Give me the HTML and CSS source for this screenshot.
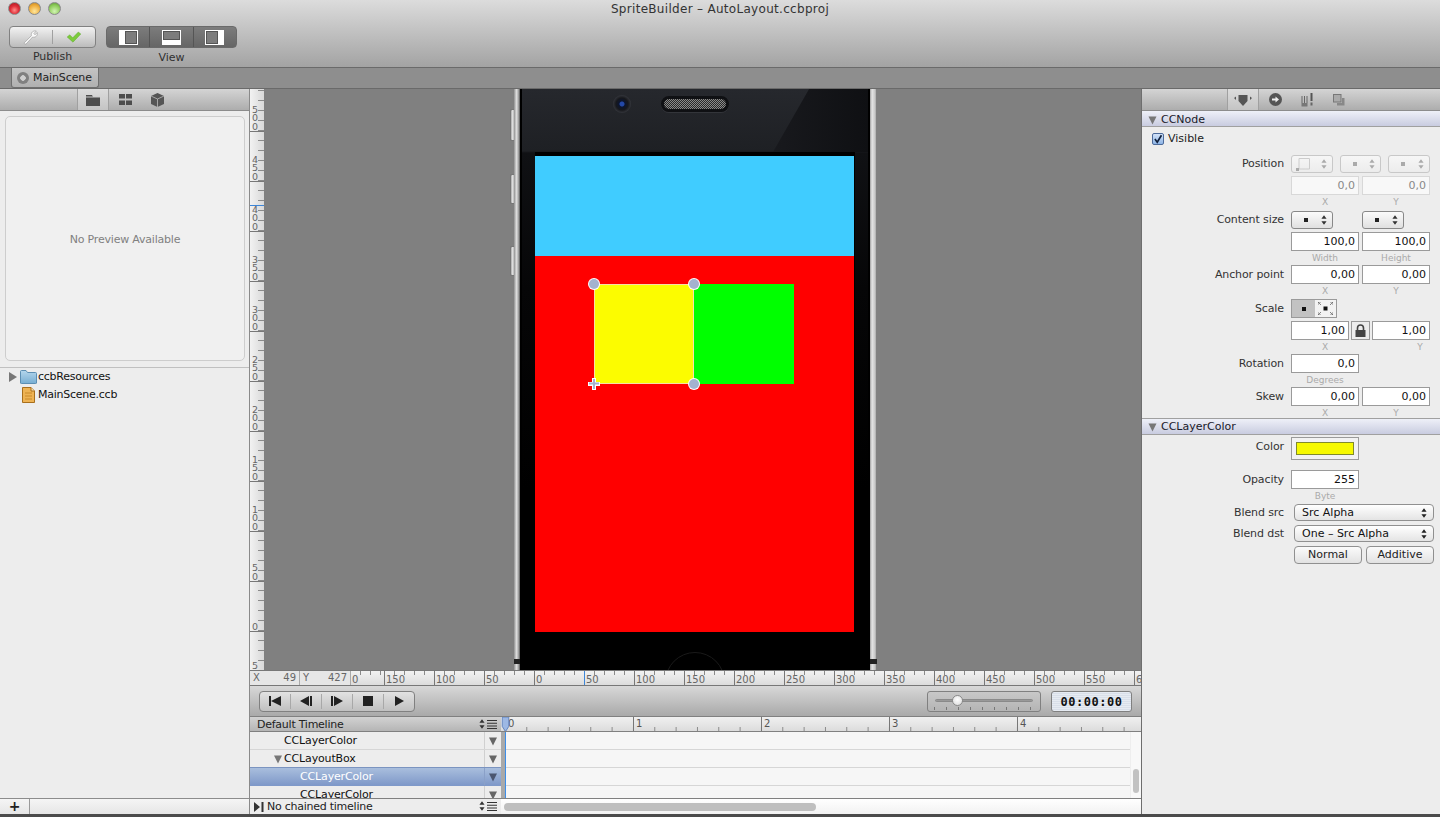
FILE: index.html
```html
<!DOCTYPE html>
<html lang="en">
<head>
<meta charset="utf-8">
<title>SpriteBuilder - AutoLayout.ccbproj</title>
<link rel="stylesheet" href="styles.css">
</head>
<body>
<svg class="sprite" aria-hidden="true">
  <symbol id="updown" viewBox="0 0 7 11"><path d="M3.500 0 L6.500 4 H.5Z M3.500 11 L6.500 7 H.5Z"/></symbol>
  <symbol id="menu" viewBox="0 0 10 9"><path d="M0 0h10v1H0zM0 2.700h10v1H0zM0 5.400h10v1H0zM0 8h10v1H0z"/></symbol>
  <symbol id="tri" viewBox="0 0 10 10"><path d="M1 1.500H9L5 9.500Z"/></symbol>
</svg>
<div class="window">
  <header class="toolbar">
    <div class="titlebar">
      <div class="lights"><span class="light red"></span><span class="light amber"></span><span class="light green"></span></div>
      <div class="title">SpriteBuilder – AutoLayout.ccbproj</div>
      <div></div>
    </div>
    <div class="tools">
      <div class="tool-group">
        <div class="seg publish">
          <span class="seg-cell"><svg width="16" height="16" viewBox="0 0 18 18"><path d="M1.500 15.500 L9.500 7.500 C8.500 4 11.500 1.500 15 2.300 L12.300 5 L13.500 6.500 L16 4 C16.800 7.500 14 10 10.800 9 L3.500 16.800 C2.500 17.300 1 16.500 1.500 15.500Z" fill="#fafafa" stroke="#8a8a8a" stroke-width=".6"/></svg></span>
          <span class="seg-cell"><svg width="16" height="12" viewBox="0 0 18 14"><path d="M1 7 L4 4.500 L7.500 8 L14 1.200 L17 3.500 L7.800 13 Z" fill="#7ccb3c" stroke="#5aa52a" stroke-width=".5"/></svg></span>
        </div>
        <div class="tool-label">Publish</div>
      </div>
      <div class="tool-group">
        <div class="seg view">
          <span class="view-cell"><svg width="19" height="15" viewBox="0 0 19 15"><rect width="19" height="15" fill="#fff"/><rect x="6.500" y="1.500" width="11" height="12" fill="#7d7d7d" stroke="#555"/></svg></span>
          <span class="view-cell"><svg width="19" height="15" viewBox="0 0 19 15"><rect width="19" height="15" fill="#fff"/><rect x="1.500" y="1.500" width="16" height="8" fill="#7d7d7d" stroke="#555"/></svg></span>
          <span class="view-cell"><svg width="19" height="15" viewBox="0 0 19 15"><rect width="19" height="15" fill="#fff"/><rect x="1.500" y="1.500" width="11" height="12" fill="#7d7d7d" stroke="#555"/></svg></span>
        </div>
        <div class="tool-label">View</div>
      </div>
    </div>
  </header>

  <div class="tabbar">
    <div class="tab"><span class="tab-dot"></span>MainScene</div>
  </div>

  <div class="main">
    <aside class="left">
      <div class="panel-head head-left">
        <span class="head-tab active"><svg width="14" height="12" viewBox="0 0 14 12"><path d="M0 1h6l1 2h7v9H0z" fill="#4d4d4d"/><path d="M0 3h14" stroke="#ccc"/></svg></span>
        <span class="head-tab"><svg width="13" height="11" viewBox="0 0 13 11"><path d="M0 0h6v4.500H0zM7 0h6v4.500H7zM0 6.500h6V11H0zM7 6.500h6V11H7z" fill="#4d4d4d"/></svg></span>
        <span class="head-tab"><svg width="13" height="14" viewBox="0 0 13 14"><path d="M6.500 0 13 3v8l-6.500 3L0 11V3z" fill="#555"/><path d="M0 3l6.500 3L13 3M6.500 6v8" stroke="#bbb" stroke-width=".8" fill="none"/></svg></span>
      </div>
      <div class="preview">No Preview Available</div>
      <div class="tree">
        <div class="tree-row"><span class="disc"></span>
          <svg class="tree-icon" width="17" height="14" viewBox="0 0 17 14"><defs><linearGradient id="fold" x1="0" y1="0" x2="0" y2="1"><stop offset="0" stop-color="#b4d6ec"/><stop offset="1" stop-color="#78aed2"/></linearGradient></defs><path d="M.5 1.500 Q.5 .5 1.500 .5H6l1.500 2h8q1 0 1 1V13q0 .5-1 .5H1.500q-1 0-1-.5z" fill="url(#fold)" stroke="#5d8fb3"/></svg>
          ccbResources</div>
        <div class="tree-row"><span class="disc-space"></span>
          <svg class="tree-icon file" width="13" height="16" viewBox="0 0 13 16"><path d="M.5.500H9L12.500 4V15.500H.5z" fill="#eeb354" stroke="#a86f1c"/><path d="M9 .5V4h3.500" fill="#fbe3b0" stroke="#a86f1c"/><path d="M3 6h7M3 9h7M3 12h7" stroke="#c98a2a"/></svg>
          MainScene.ccb</div>
      </div>
      <div class="left-foot"><span class="plus">+</span></div>
    </aside>

    <section class="center">
      <div class="stage">
        <div class="vruler">
          <div class="vcell">500</div><div class="vcell">450</div><div class="vcell">400</div><div class="vcell">350</div><div class="vcell">300</div><div class="vcell">250</div><div class="vcell">200</div><div class="vcell">150</div><div class="vcell">100</div><div class="vcell">50</div><div class="vcell">0</div><div class="vcell vlast">5</div>
          <span class="vmark"></span>
        </div>
        <div class="canvas">
          <div class="side-btn b1"></div><div class="side-btn b2"></div><div class="side-btn b3"></div>
          <div class="strip strip-l"><span class="notch"></span></div>
          <div class="strip strip-r"><span class="notch"></span></div>
          <div class="phone">
            <div class="glare"></div>
            <div class="camera"></div>
            <div class="speaker"></div>
            <div class="home"></div>
          </div>
          <div class="screen">
            <div class="sc-blue"></div>
            <div class="sc-yellow"></div>
            <div class="sc-green"></div>
            <span class="handle h-tl"></span>
            <span class="handle h-tr"></span>
            <span class="handle h-br"></span>
            <svg class="anchor" width="12" height="12" viewBox="0 0 12 12"><path d="M4 0h4v4h4v4H8v4H4V8H0V4h4z" fill="#fff"/><path d="M5 1h2v3.500H11v2H7V11H5V6.500H1v-2h4z" fill="#a4b2cf"/></svg>
          </div>
        </div>
      </div>

      <div class="ruler-row">
        <div class="coord coord-x"><span>X</span><span>49</span></div>
        <div class="coord coord-y"><span>Y</span><span>427</span></div>
        <div class="hruler">
          <div class="hcell hfirst">0</div><div class="hcell">150</div><div class="hcell">100</div><div class="hcell">50</div><div class="hcell">0</div><div class="hcell mark">50</div><div class="hcell">100</div><div class="hcell">150</div><div class="hcell">200</div><div class="hcell">250</div><div class="hcell">300</div><div class="hcell">350</div><div class="hcell">400</div><div class="hcell">450</div><div class="hcell">500</div><div class="hcell">550</div><div class="hcell hlast">6</div>
        </div>
      </div>

      <div class="transport">
        <div class="tbtns">
          <span class="tbtn"><svg width="12" height="10" viewBox="0 0 12 10"><path d="M0 0h2v10H0zM2 5l10-5v10z" fill="#222"/></svg></span>
          <span class="tbtn"><svg width="12" height="10" viewBox="0 0 12 10"><path d="M0 5l9-5v10zM10 0h2v10h-2z" fill="#222"/></svg></span>
          <span class="tbtn"><svg width="12" height="10" viewBox="0 0 12 10"><path d="M0 0h2v10H0zM3 0l9 5-9 5z" fill="#222"/></svg></span>
          <span class="tbtn"><svg width="10" height="10" viewBox="0 0 10 10"><path d="M0 0h10v10H0z" fill="#222"/></svg></span>
          <span class="tbtn"><svg width="10" height="10" viewBox="0 0 10 10"><path d="M1 0l9 5-9 5z" fill="#222"/></svg></span>
        </div>
        <div class="slider"><span class="track"></span><span class="knob"></span><span class="scale"></span></div>
        <div class="timecode">00:00:00</div>
      </div>

      <div class="timeline">
        <div class="tl-head">
          <div class="tl-name head-name">Default Timeline
            <span class="tl-ctl"><svg width="6" height="10"><use href="#updown"/></svg><svg width="10" height="9"><use href="#menu"/></svg></span>
          </div>
          <div class="tl-ruler">
            <div class="tcell">0</div><div class="tcell">1</div><div class="tcell">2</div><div class="tcell">3</div><div class="tcell">4</div>
            <svg class="playhead" width="9" height="15" viewBox="0 0 9 16"><path d="M1 0H8V10L4.500 15.500 1 10z" fill="#9db8e4" stroke="#5f82bd"/></svg>
          </div>
        </div>
        <div class="tl-body">
          <div class="tl-rows">
            <div class="tl-row"><span class="i1">CCLayerColor</span><span class="tl-drop"><svg width="10" height="10"><use href="#tri"/></svg></span></div>
            <div class="tl-row"><span class="i1 with-tri"><svg class="row-tri" width="10" height="10"><use href="#tri"/></svg>CCLayoutBox</span><span class="tl-drop"><svg width="10" height="10"><use href="#tri"/></svg></span></div>
            <div class="tl-row sel"><span class="i2">CCLayerColor</span><span class="tl-drop"><svg width="10" height="10"><use href="#tri"/></svg></span></div>
            <div class="tl-row"><span class="i2">CCLayerColor</span><span class="tl-drop"><svg width="10" height="10"><use href="#tri"/></svg></span></div>
          </div>
          <div class="tl-grid">
            <span class="tl-line"></span>
            <span class="tl-line"></span>
            <span class="tl-line"></span>
            <span class="tl-line"></span>
            <span class="tl-gutter"><span class="tl-thumb"></span></span>
          </div>
        </div>
        <div class="tl-foot">
          <div class="tl-name foot-name"><svg class="chain" width="11" height="10" viewBox="0 0 11 10"><path d="M0 0l6 5-6 5zM7.500 0h2v10h-2z" fill="#333"/></svg>No chained timeline
            <span class="tl-ctl"><svg width="6" height="10"><use href="#updown"/></svg><svg width="10" height="9"><use href="#menu"/></svg></span>
          </div>
          <div class="hscroll"><span class="hthumb"></span></div>
        </div>
      </div>
    </section>

    <aside class="right">
      <div class="panel-head head-right">
        <span class="head-tab active"><svg width="18" height="12" viewBox="0 0 18 12"><path d="M4.500 1H13.500V7L9 12 4.500 7z" fill="#555"/><path d="M0 4l2 -1.500V6zM18 4l-2-1.500V6z" fill="#555"/></svg></span>
        <span class="head-tab"><svg width="13" height="13" viewBox="0 0 13 13"><circle cx="6.500" cy="6.500" r="6.500" fill="#555"/><path d="M3 5.500h3.500V3.500L10 6.500 6.500 9.500V7.500H3z" fill="#eee"/></svg></span>
        <span class="head-tab"><svg width="13" height="14" viewBox="0 0 13 14"><path d="M1 3v7M3.500 3v7M6 3v7" stroke="#666" stroke-width="1"/><rect x=".5" y="10" width="6" height="3.500" fill="#777"/><path d="M10.500 0v8" stroke="#555" stroke-width="2"/><rect x="9.500" y="9.500" width="2" height="3" fill="#666"/></svg></span>
        <span class="head-tab"><svg width="12" height="12" viewBox="0 0 12 12"><rect x=".5" y=".5" width="7.500" height="7.500" fill="#aaa" stroke="#777"/><path d="M9 4h2.500v7.500H4V9h5z" fill="#888"/></svg></span>
      </div>

      <div class="sec-head first"><svg class="sec-tri" width="11" height="10"><use href="#tri"/></svg>CCNode</div>
      <div class="visible-row"><span class="check"><svg width="13" height="13" viewBox="0 0 13 13"><path d="M2.500 6 L5.500 10 L11 1" fill="none" stroke="#10203c" stroke-width="2.200"/></svg></span>Visible</div>

      <div class="row mt5"><span class="lbl">Position</span>
        <span class="pop off pw"><svg class="pin corner" width="14" height="13" viewBox="0 0 14 13"><path d="M3 .5H13.500V11H3z" fill="none" stroke="#ccc"/><rect y="10" width="3" height="3" fill="#aaa"/></svg><svg class="ud" width="6" height="10"><use href="#updown"/></svg></span>
        <span class="pop off pw2 pw-b"><span class="sq"></span><svg class="ud" width="6" height="10"><use href="#updown"/></svg></span>
        <span class="pop off pw2"><span class="sq"></span><svg class="ud" width="6" height="10"><use href="#updown"/></svg></span>
      </div>
      <div class="row mt3"><span class="lbl"></span><span class="field w68 off">0,0</span><span class="field w68 off g3">0,0</span></div>
      <div class="sub"><span>X</span><span>Y</span></div>

      <div class="row mt2 r18"><span class="lbl">Content size</span>
        <span class="pop pw"><span class="sq"></span><svg class="ud" width="6" height="10"><use href="#updown"/></svg></span>
        <span class="pop pw gap29"><span class="sq"></span><svg class="ud" width="6" height="10"><use href="#updown"/></svg></span>
      </div>
      <div class="row mt3"><span class="lbl"></span><span class="field w68">100,0</span><span class="field w68 g3">100,0</span></div>
      <div class="sub"><span>Width</span><span>Height</span></div>

      <div class="row"><span class="lbl">Anchor point</span><span class="field w68">0,00</span><span class="field w68 g3">0,00</span></div>
      <div class="sub"><span>X</span><span>Y</span></div>

      <div class="row mt1"><span class="lbl">Scale</span>
        <span class="scale-seg"><span class="sc-on"><span class="sq dark"></span></span><span class="sc-off"><svg width="15" height="13" viewBox="0 0 15 13"><rect x="5.500" y="4.500" width="4" height="4" fill="#111"/><path d="M0 3V0h3M15 3V0h-3M0 10v3h3M15 10v3h-3M0 0l3 3M15 0l-3 3M0 13l3-3M15 13l-3-3" fill="none" stroke="#666" stroke-width=".8"/></svg></span></span>
      </div>
      <div class="row mt3"><span class="lbl"></span><span class="field w58">1,00</span>
        <span class="lock"><svg width="11" height="13" viewBox="0 0 11 13"><path d="M2.500 6V4a3 3 0 0 1 6 0v2" fill="none" stroke="#444" stroke-width="1.600"/><rect x=".5" y="6" width="10" height="7" fill="#444"/></svg></span>
        <span class="field w58">1,00</span></div>
      <div class="sub sub-scale"><span>X</span><span>Y</span></div>

      <div class="row"><span class="lbl">Rotation</span><span class="field w68">0,0</span></div>
      <div class="sub"><span>Degrees</span></div>

      <div class="row"><span class="lbl">Skew</span><span class="field w68">0,00</span><span class="field w68 g3">0,00</span></div>
      <div class="sub short"><span>X</span><span>Y</span></div>

      <div class="sec-head line"><svg class="sec-tri" width="11" height="10"><use href="#tri"/></svg>CCLayerColor</div>

      <div class="row color-row"><span class="lbl lbl-top">Color</span><span class="well"><span class="well-in"></span></span></div>
      <div class="row mt10"><span class="lbl">Opacity</span><span class="field w68">255</span></div>
      <div class="sub"><span>Byte</span></div>
      <div class="row r17 mt1"><span class="lbl">Blend src</span><span class="select">Src Alpha<svg width="6" height="10"><use href="#updown"/></svg></span></div>
      <div class="row r17 mt4"><span class="lbl">Blend dst</span><span class="select">One – Src Alpha<svg width="6" height="10"><use href="#updown"/></svg></span></div>
      <div class="row r18 mt4"><span class="lbl"></span><span class="btn">Normal</span><span class="btn">Additive</span></div>
    </aside>
  </div>
  <div class="bottom-edge"></div>
</div>
</body>
</html>
```
FILE: styles.css
```css
* { box-sizing: border-box; }
html, body { margin: 0; padding: 0; height: 100%; overflow: hidden; }
body { font: 11px/1.2 "DejaVu Sans", "Liberation Sans", sans-serif; color: #1d1d1d; background: #ededed; }
.sprite { position: absolute; width: 0; height: 0; }
.window { width: 1440px; height: 817px; display: flex; flex-direction: column; overflow: hidden; }

/* toolbar */
.toolbar { height: 68px; flex: none; background: linear-gradient(#dcdcdc, #a3a3a3); border-bottom: 1px solid #6a6a6a; }
.titlebar { height: 26px; display: grid; grid-template-columns: 1fr auto 1fr; align-items: start; }
.lights { display: flex; gap: 7px; padding: 2px 0 0 8px; }
.light { width: 13px; height: 13px; border-radius: 50%; border: 1px solid #8a8a8a; }
.red { background: radial-gradient(circle at 50% 65%, #ff8d8a, #e0303a 45%, #a3111a); }
.amber { background: radial-gradient(circle at 50% 75%, #ffe79c, #edab3a 60%, #bc801f); }
.green { background: radial-gradient(circle at 50% 75%, #d2f4b4, #8ccb58 60%, #588f34); }
.title { font-size: 12px; color: #333; padding-top: 2px; line-height: 15px; letter-spacing: .3px; }
.tools { display: flex; gap: 10px; padding-left: 9px; }
.tool-group { display: flex; flex-direction: column; align-items: center; }
.tool-label { font-size: 11px; line-height: 14px; margin-top: 2px; color: #303030; }
.view + .tool-label { margin-top: 3px; }
.seg { height: 22px; display: flex; border-radius: 4px; }
.publish { width: 87px; background: linear-gradient(#f2f2f2, #bcbcbc); border: 1px solid #818181; }
.seg-cell { flex: 1; display: flex; align-items: center; justify-content: center; }
.seg-cell + .seg-cell { border-left: 1px solid #a0a0a0; margin: 3px 0; }
.view { width: 131px; background: linear-gradient(#7c7c7c, #666); border: 1px solid #6a6a6a; }
.view-cell { flex: 1; display: flex; align-items: center; justify-content: center; }
.view-cell + .view-cell { border-left: 1px solid #555; }

/* tab bar */
.tabbar { height: 21px; flex: none; background: #8e8e8e; border-bottom: 1px solid #6a6a6a; padding-left: 11px; }
.tab { width: 88px; height: 20px; display: flex; align-items: center; gap: 4px; padding-left: 5px; background: linear-gradient(#c4c4c4, #b0b0b0); border: 1px solid #6f6f6f; border-top: 0; border-radius: 0 0 3px 3px; font-size: 11px; color: #222; letter-spacing: -.1px; }
.tab-dot { width: 12px; height: 12px; border-radius: 50%; background: radial-gradient(circle, #cfcfcf 0 2.500px, #808080 3px); flex: none; }

.main { flex: 1; display: flex; min-height: 0; }
.bottom-edge { height: 3px; flex: none; background: #4b4b4b; }

/* panel heads */
.panel-head { height: 22px; flex: none; display: flex; align-items: stretch; background: linear-gradient(#d4d4d4, #adadad); border-bottom: 1px solid #8c8c8c; }
.head-left { padding-left: 77px; }
.head-right { padding-left: 85px; }
.head-tab { width: 32px; display: flex; align-items: center; justify-content: center; }
.head-tab.active { background: linear-gradient(#dcdcdc, #c4c4c4); border-left: 1px solid #a0a0a0; border-right: 1px solid #a0a0a0; }

/* left */
.left { width: 250px; flex: none; display: flex; flex-direction: column; background: #ededed; border-right: 1px solid #8a8a8a; }
.preview { height: 245px; margin: 5px 4px 0 5px; padding-top: 2px; border: 1px solid #cdcdcd; border-radius: 5px; background: #f0f0f0; color: #808080; display: flex; align-items: center; justify-content: center; flex: none; font-size: 11px; letter-spacing: -.2px; }
.tree { flex: 1; margin-top: 6px; border-top: 1px solid #c0c0c0; }
.tree-row { height: 18px; display: flex; align-items: center; color: #111; font-size: 11px; letter-spacing: -.25px; }
.disc { width: 0; height: 0; margin-left: 9px; border-left: 8px solid #777; border-top: 5px solid transparent; border-bottom: 5px solid transparent; margin-right: 3px; }
.disc-space { width: 22px; }
.tree-icon { margin-right: 1px; flex: none; }
.tree-icon.file { margin-right: 3px; }
.left-foot { height: 16px; flex: none; border-top: 1px solid #8c8c8c; background: linear-gradient(#f5f5f5, #e6e6e6); display: flex; }
.plus { width: 30px; border-right: 1px solid #9a9a9a; text-align: center; font-weight: bold; font-size: 14px; line-height: 14px; color: #222; }

/* center */
.center { width: 892px; flex: none; display: flex; flex-direction: column; border-right: 1px solid #6e6e6e; }
.stage { height: 581px; flex: none; display: flex; overflow: hidden; }
.vruler { width: 14px; flex: none; position: relative; overflow: hidden; background: linear-gradient(to right, #f2f2f2, #d9d9d9); }
.vcell { width: 14px; height: 50px; position: relative; top: -7px; border-bottom: 1px solid #777; padding: 0 0 0 2px; display: flex; align-items: flex-end; word-break: break-all; font-size: 9.500px; line-height: 8.500px; color: #666; background: linear-gradient(to top, #8a8a8a 1px, transparent 1px) right bottom / 6px 10px repeat-y; }
.vcell.vlast { height: 38px; border-bottom: 0; background-position: right 9px; }
.vmark { position: absolute; left: 0; right: 0; top: 116px; height: 1px; background: #3d86d8; }
.canvas { flex: 1; position: relative; background: #808080; overflow: hidden; }
.side-btn { position: absolute; left: 246px; width: 5px; background: linear-gradient(to right, #a8a8a8, #e8e8e8 45%, #777); border: 1px solid #777; border-right: 0; border-radius: 2px 0 0 2px; }
.b1 { top: 20px; height: 32px; }
.b2 { top: 85px; height: 30px; }
.b3 { top: 157px; height: 30px; }
.strip { position: absolute; top: 0; width: 6px; height: 581px; background: linear-gradient(to right, #8f8f8f, #dedede 40%, #b0b0b0 70%, #555); }
.strip-l { left: 250px; }
.strip-r { left: 606px; width: 7px; background: linear-gradient(to right, #a0a0a0, #e4e4e4 30%, #c4c4c4 75%, #666); }
.notch { position: absolute; left: 0; right: 0; top: 570px; height: 5px; background: #222; }
.phone { position: absolute; left: 256px; top: 0; width: 350px; height: 581px; border-left: 2px solid #000; border-right: 2px solid #000; background: linear-gradient(#26282d, #1e2024 62px, #101114 64px, #060607 200px, #000 400px); overflow: hidden; }
.glare { position: absolute; right: 0; top: 0; width: 95px; height: 63px; background: linear-gradient(to right, #18191d, #0f1013); clip-path: polygon(38% 0, 100% 0, 100% 100%, 0 100%); }
.camera { position: absolute; left: 91px; top: 6px; width: 18px; height: 18px; border-radius: 50%; background: radial-gradient(circle, #2348a8 0 2px, #0b1530 3px, #17181c 6px, #34363c 9px); }
.speaker { position: absolute; left: 139px; top: 7px; width: 68px; height: 16px; border-radius: 8px; background: repeating-conic-gradient(#8a8a8a 0 25%, #2a2a2a 0 50%) 0 0 / 2px 2px; border: 3px solid #0f1013; box-shadow: 0 1px 0 #33353a; }
.home { position: absolute; left: 143px; top: 563px; width: 60px; height: 60px; border-radius: 50%; border: 1px solid #1a1a1a; }
.screen { position: absolute; left: 271px; top: 63px; width: 320px; height: 480px; background: #f00; border-top: 4px solid #000; border-right: 1px solid #000; }
.sc-blue { position: absolute; left: 0; right: 0; top: 0; height: 100px; background: #40ccff; }
.sc-yellow { position: absolute; left: 59px; top: 128px; width: 100px; height: 100px; background: #fcfc00; box-shadow: inset 0 0 0 1px #f7dfa8; }
.sc-green { position: absolute; left: 159px; top: 128px; width: 100px; height: 100px; background: #0f0; }
.handle { position: absolute; width: 10px; height: 10px; border-radius: 50%; background: #a4b2cf; box-shadow: 0 0 0 1px #fff; }
.h-tl { left: 54px; top: 123px; }
.h-tr { left: 154px; top: 123px; }
.h-br { left: 154px; top: 223px; }
.anchor { position: absolute; left: 53px; top: 222px; }

/* horizontal ruler */
.ruler-row { height: 16px; flex: none; display: flex; border-top: 1px solid #777; border-bottom: 1px solid #777; background: #e6e6e6; font-size: 10px; color: #666; overflow: hidden; }
.coord { display: flex; justify-content: space-between; align-items: center; padding: 0 3px; flex: none; height: 14px; line-height: 14px; }
.coord-x { width: 50px; border-right: 1px solid #aaa; }
.coord-y { width: 50px; }
.hruler { flex: 1; min-width: 0; display: flex; overflow: hidden; background: linear-gradient(#f2f2f2, #dcdcdc); }
.hcell { width: 50px; flex: none; height: 14px; border-left: 1px solid #777; padding: 3px 0 0 1px; line-height: 11px; background: linear-gradient(to right, #8a8a8a 1px, transparent 1px) 9px 0 / 10px 4px repeat-x; }
.hcell.hfirst { width: 34px; border-left: 1px solid #aaa; }
.hcell.hlast { width: 7px; }
.hcell.mark { border-left-color: #3d86d8; }

/* transport */
.transport { height: 31px; flex: none; display: flex; align-items: center; padding: 0 9px; background: linear-gradient(#d8d8d8, #a9a9a9); border-bottom: 1px solid #808080; }
.tbtns { width: 156px; height: 21px; display: flex; border: 1px solid #808080; border-radius: 4px; background: linear-gradient(#e2e2e2, #c0c0c0); }
.tbtn { flex: 1; display: flex; align-items: center; justify-content: center; }
.tbtn + .tbtn { border-left: 1px solid #a8a8a8; margin: 2px 0; }
.slider { width: 114px; height: 21px; margin-left: auto; position: relative; border: 1px solid #808080; border-radius: 3px; background: linear-gradient(#c8c8c8, #b4b4b4); }
.track { position: absolute; left: 7px; right: 7px; top: 7px; height: 3px; border-radius: 2px; background: #999; border: 1px solid #8a8a8a; }
.knob { position: absolute; left: 24px; top: 3px; width: 11px; height: 11px; border-radius: 50%; background: radial-gradient(circle at 50% 40%, #fff, #d8d8d8); border: 1px solid #8a8a8a; }
.scale { position: absolute; left: 6px; right: 7px; top: 15px; height: 3px; background: linear-gradient(to right, #777 1px, transparent 1px) 0 0 / 12px 3px repeat-x; }
.timecode { width: 81px; height: 21px; margin-left: 10px; border: 1px solid #808080; border-radius: 3px; background: repeating-linear-gradient(#e6ebf2 0 1px, #d9dfe9 1px 2px); font: bold 12px/20px "DejaVu Sans Mono", monospace; text-align: center; color: #111; letter-spacing: .5px; }

/* timeline */
.timeline { flex: 1; min-height: 0; display: flex; flex-direction: column; }
.tl-head { height: 15px; flex: none; display: flex; border-bottom: 1px solid #808080; }
.tl-name { width: 251px; flex: none; display: flex; align-items: center; padding-left: 7px; position: relative; background: linear-gradient(#d2d2d2, #b5b5b5); font-size: 11px; color: #222; letter-spacing: -.25px; }
.head-name { padding-top: 2px; }
.tl-ctl { position: absolute; right: 4px; top: 2px; display: flex; gap: 2px; align-items: center; }
.tl-ctl svg { fill: #333; }
.tl-ruler { flex: 1; min-width: 0; position: relative; display: flex; overflow: hidden; background: linear-gradient(#f0f0f0, #dcdcdc); padding-left: 4px; }
.tcell { width: 128px; flex: none; border-left: 1px solid #777; height: 14px; padding-left: 2px; font-size: 10px; line-height: 14px; color: #555; background: linear-gradient(to right, #888 1px, transparent 1px) 20.300px 100% / 21.330px 4px repeat-x; }
.playhead { position: absolute; left: 0; top: 0; }
.tl-body { flex: 1; min-height: 0; display: flex; overflow: hidden; }
.tl-rows { width: 251px; flex: none; background: #ededed; }
.tl-row { height: 18px; display: flex; align-items: center; justify-content: space-between; border-bottom: 1px solid #d6d6d6; color: #111; font-size: 11px; position: relative; letter-spacing: -.15px; }
.tl-row .i1 { padding-left: 34px; position: relative; }
.tl-row .i2 { padding-left: 50px; }
.row-tri { position: absolute; left: 23px; top: 2px; fill: #777; }
.tl-row.sel { background: linear-gradient(#a9bedd, #7f99c9); color: #fff; border-bottom-color: #7f99c9; border-top: 1px solid #7b94c0; margin-top: -1px; height: 19px; }
.tl-drop { width: 17px; height: 100%; border-left: 1px solid #d0d0d0; display: flex; align-items: center; justify-content: center; flex: none; }
.tl-drop svg { fill: #666; }
.sel .tl-drop { border-left-color: #8aa0c8; }
.sel .tl-drop svg { fill: #4b5670; }
.tl-grid { flex: 1; min-width: 0; position: relative; background: #f6f6f6; border-left: 4px solid #a9a9a9; }
.tl-grid::before { content: ""; position: absolute; left: 0; top: 0; bottom: 0; width: 1px; background: #3d8ee8; }
.tl-line { display: block; height: 18px; border-bottom: 1px solid #d6d6d6; }
.tl-gutter { position: absolute; right: 0; top: 0; bottom: 0; width: 11px; background: #f8f8f8; border-left: 1px solid #eee; }
.tl-thumb { position: absolute; left: 2px; right: 2px; top: 37px; height: 24px; border-radius: 4px; background: #c2c2c2; }
.tl-foot { height: 16px; flex: none; display: flex; border-top: 1px solid #808080; }
.foot-name { background: #ededed; padding-left: 4px; }
.chain { margin-right: 2px; }
.hscroll { flex: 1; min-width: 0; background: linear-gradient(#ffffff, #f2f2f2); padding: 4px 0 0 3px; }
.hthumb { display: block; width: 312px; height: 8px; border-radius: 4px; background: #bfbfbf; }

/* inspector */
.right { flex: 1; min-width: 0; background: #ededed; color: #333; display: flex; flex-direction: column; }
.sec-head { height: 16px; flex: none; display: flex; align-items: center; padding: 1px 0 0 5px; gap: 3px; font-size: 11px; color: #1a1a2a; background: linear-gradient(#eef0f8, #c9cce0); border-bottom: 1px solid #a0a0a0; }
.sec-head.first { padding-top: 3px; }
.sec-head.line { height: 17px; border-top: 1px solid #a0a0a0; }
.sec-tri { fill: #777; }
.visible-row { height: 22px; flex: none; display: flex; align-items: center; gap: 4px; padding: 2px 0 0 10px; font-size: 11px; color: #222; }
.check { width: 12px; height: 12px; border-radius: 2px; border: 1px solid #4c6a9a; background: linear-gradient(#d2e2f8, #8db4e6); display: flex; align-items: center; justify-content: center; }
.row { height: 19px; flex: none; display: flex; align-items: center; }
.r18 { height: 18px; }
.r17 { height: 17px; }
.mt1 { margin-top: 1px; }
.mt2 { margin-top: 2px; }
.mt3 { margin-top: 3px; }
.mt4 { margin-top: 4px; }
.mt5 { margin-top: 5px; }
.mt10 { margin-top: 10px; }
.lbl { width: 142px; margin-right: 7px; text-align: right; font-size: 11px; color: #333; flex: none; letter-spacing: -.1px; }
.field { height: 19px; flex: none; background: #fff; border: 1px solid #9a9a9a; text-align: right; padding-right: 3px; line-height: 17px; font-size: 11px; color: #111; }
.w68 { width: 68px; }
.w58 { width: 58px; }
.g3 { margin-left: 3px; }
.field.off { border-color: #d8d8d8; color: #888; background: #f8f8f8; }
.sub { height: 14px; flex: none; padding-left: 149px; display: grid; grid-template-columns: 68px 68px; column-gap: 3px; text-align: center; font-size: 9px; line-height: 14px; color: #aaa; }
.sub.short { height: 12px; }
.sub-scale { grid-template-columns: 68px 81px; column-gap: 0; }
.sub-scale span:last-child { padding-left: 41px; }
.pop { height: 18px; flex: none; display: flex; align-items: center; justify-content: space-between; padding: 0 5px 0 12px; border: 1px solid #888; border-radius: 3px; background: linear-gradient(#fbfbfb, #e0e0e0); position: relative; }
.pw { width: 42px; }
.pw2 { width: 42px; margin-left: 7px; }
.pw-b { width: 41px; }
.gap29 { margin-left: 29px; }
.pop.off { border-color: #c8c8c8; background: linear-gradient(#f6f6f6, #ececec); }
.pop.off .sq { background: #aaa; }
.pop.off .ud { fill: #aaa; }
.ud { fill: #333; flex: none; }
.sq { width: 4px; height: 4px; background: #222; flex: none; }
.pin.corner { position: absolute; left: 4px; top: 2px; }
.pop:has(.corner) { justify-content: flex-end; }
.scale-seg { width: 46px; height: 19px; display: flex; border: 1px solid #9a9a9a; }
.sc-on { width: 23px; background: #c2c2c2; display: flex; align-items: center; justify-content: center; }
.sc-off { flex: 1; background: #f2f2f2; display: flex; align-items: center; justify-content: center; }
.sq.dark { background: #111; }
.lock { width: 19px; height: 19px; margin: 0 2px; border: 1px solid #9a9a9a; background: #ededed; display: flex; align-items: center; justify-content: center; flex: none; }
.color-row { height: 23px; margin-top: 2px; }
.lbl-top { align-self: flex-start; padding-top: 3px; }
.well { width: 68px; height: 23px; border: 1px solid #9a9a9a; background: #f2f2f2; padding: 4px; flex: none; }
.well-in { display: block; height: 13px; background: #f6f900; border: 1px solid #808a2c; }
.select { width: 140px; height: 17px; margin-left: 3px; border: 1px solid #909090; border-radius: 4px; background: linear-gradient(#ffffff, #e4e4e4); display: flex; align-items: center; justify-content: space-between; padding: 0 6px 0 7px; color: #111; flex: none; font-size: 11px; }
.select svg { fill: #222; }
.btn { width: 68px; height: 18px; margin-left: 3px; margin-right: 1px; border: 1px solid #909090; border-radius: 4px; background: linear-gradient(#fbfbfb, #e2e2e2); text-align: center; line-height: 16px; color: #222; flex: none; font-size: 11px; }
```
